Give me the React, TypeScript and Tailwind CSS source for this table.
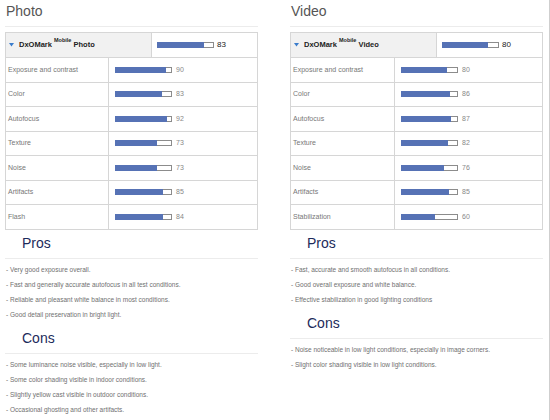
import React from "react";

interface Score {
  label: string;
  value: number;
}

interface Section {
  title: string;
  kind: string;
  total: number;
  labelWidth: string;
  scores: Score[];
  pros: string[];
  cons: string[];
}

const sections: Section[] = [
  {
    title: "Photo",
    kind: "Photo",
    total: 83,
    labelWidth: "w-[103px]",
    scores: [
      { label: "Exposure and contrast", value: 90 },
      { label: "Color", value: 83 },
      { label: "Autofocus", value: 92 },
      { label: "Texture", value: 73 },
      { label: "Noise", value: 73 },
      { label: "Artifacts", value: 85 },
      { label: "Flash", value: 84 },
    ],
    pros: [
      "Very good exposure overall.",
      "Fast and generally accurate autofocus in all test conditions.",
      "Reliable and pleasant white balance in most conditions.",
      "Good detail preservation in bright light.",
    ],
    cons: [
      "Some luminance noise visible, especially in low light.",
      "Some color shading visible in indoor conditions.",
      "Slightly yellow cast visible in outdoor conditions.",
      "Occasional ghosting and other artifacts.",
    ],
  },
  {
    title: "Video",
    kind: "Video",
    total: 80,
    labelWidth: "w-[104px]",
    scores: [
      { label: "Exposure and contrast", value: 80 },
      { label: "Color", value: 86 },
      { label: "Autofocus", value: 87 },
      { label: "Texture", value: 82 },
      { label: "Noise", value: 76 },
      { label: "Artifacts", value: 85 },
      { label: "Stabilization", value: 60 },
    ],
    pros: [
      "Fast, accurate and smooth autofocus in all conditions.",
      "Good overall exposure and white balance.",
      "Effective stabilization in good lighting conditions",
    ],
    cons: [
      "Noise noticeable in low light conditions, especially in image corners.",
      "Slight color shading visible in low light conditions.",
    ],
  },
];

const Bar = ({ value }: { value: number }) => (
  <div className="flex w-[57px] h-[6px]">
    <div className="h-full bg-[#5672b5]" style={{ width: `${value}%` }} />
    <div className="flex-1 h-full border border-l-0 border-[#8c8c8c] bg-white" />
  </div>
);

const ProsCons = ({ title, items }: { title: string; items: string[] }) => (
  <div>
    <h3 className="h-[26px] pl-[17px] text-[14px] leading-[20px] text-[#1d2b5b] border-b border-[#ececec]">
      {title}
    </h3>
    <ul className="pt-[3px] pb-[6px] text-[6.5px] leading-[15px] text-[#707070]">
      {items.map((item) => (
        <li key={item} className="pl-px">
          - {item}
        </li>
      ))}
    </ul>
  </div>
);

const Column = ({ s }: { s: Section }) => (
  <div className="w-[253px]">
    <h2 className="h-[27px] pt-px text-[14px] leading-[20px] text-[#555] pl-px border-b border-[#ececec]">
      {s.title}
    </h2>

    {/* Score table */}
    <div className="mt-[5px] mb-[3px] border-t border-l border-r border-[#d6d6d6]">
      <div className="flex h-[25px] border-b border-[#d6d6d6]">
        <div className="w-[146px] flex items-center bg-[#f1f1f1] border-r border-[#d6d6d6] pl-[3px]">
          <svg width="5" height="4" viewBox="0 0 5 4" className="mr-[5px]">
            <polygon points="0,0 5,0 2.5,3.5" fill="#3a7ccc" />
          </svg>
          <span className="text-[7.5px] font-bold text-[#222]">
            DxOMark <sup className="text-[5.5px] align-[3px]">Mobile</sup> {s.kind}
          </span>
        </div>
        <div className="flex-1 flex items-center pl-[5px]">
          <Bar value={s.total} />
          <span className="ml-[3px] text-[8px] text-[#222]">{s.total}</span>
        </div>
      </div>
      {s.scores.map((r) => (
        <div key={r.label} className="flex h-[24.5px] border-b border-[#d6d6d6]">
          <div className={`${s.labelWidth} flex items-center border-r border-[#d6d6d6] pl-[2px] text-[7px] text-[#777]`}>
            {r.label}
          </div>
          <div className="flex-1 flex items-center pl-[6px]">
            <Bar value={r.value} />
            <span className="ml-[4px] text-[7px] text-[#888]">{r.value}</span>
          </div>
        </div>
      ))}
    </div>

    <ProsCons title="Pros" items={s.pros} />
    <ProsCons title="Cons" items={s.cons} />
  </div>
);

export default function App() {
  return (
    <div className="w-[550px] h-[420px] overflow-hidden bg-white border-r border-[#cfcfcf] font-['Liberation_Sans',Arial,sans-serif]">
      <div className="flex gap-[32px] pl-[5px]">
        {sections.map((s) => (
          <Column key={s.title} s={s} />
        ))}
      </div>
    </div>
  );
}
